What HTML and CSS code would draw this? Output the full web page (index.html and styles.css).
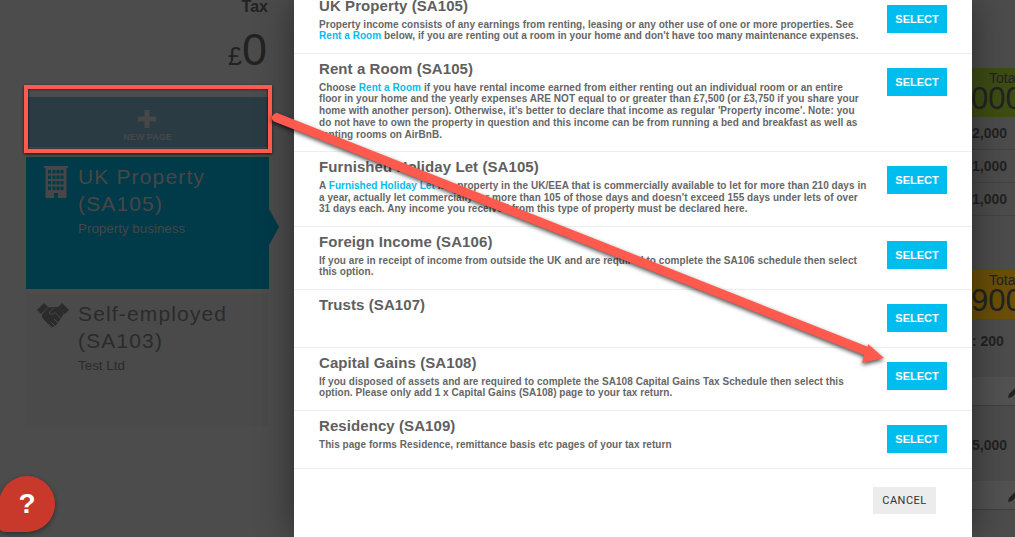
FILE: index.html
```html
<!DOCTYPE html>
<html lang="en">
  <head>
    <meta charset="UTF-8" />
    <title>Add a page</title>
    <link rel="stylesheet" href="styles.css">
  </head>
  <body>
    <div class="page">
      <!-- Sidebar behind the overlay -->
      <aside class="sidebar">
        <div class="tax">
          <strong class="tax-label">Tax</strong>
          <div class="tax-amount"><span class="pound">£</span>0</div>
        </div>
        <div class="new-page">
          <svg class="plus" viewBox="0 0 20 20" width="20" height="20"><path d="M7.5 1h5v6.5H19v5h-6.5V19h-5v-6.5H1v-5h6.500z" /></svg>
          <span>NEW PAGE</span>
        </div>
        <div class="page-card active">
          <svg class="card-icon" viewBox="0 0 24 34" width="24" height="34">
            <path fill-rule="evenodd" d="M0 0h24v2h-1.500v30H14v-5h-4v5H1.500V2H0zM4 4v3.500h3V4zm4.500 0v3.500h3V4zm4 0v3.500h3V4zm4 0v3.500h3V4zM4 9.500V13h3V9.500zm4.500 0V13h3V9.500zm4 0V13h3V9.500zm4 0V13h3V9.500zM4 15v3.500h3V15zm4.500 0v3.500h3V15zm4 0v3.500h3V15zm4 0v3.500h3V15zM4 20.500v3.500h3v-3.500zm4.500 0v3.500h3v-3.500zm4 0v3.500h3v-3.500zm4 0v3.500h3v-3.500z" />
          </svg>
          <div class="card-text">
            <h2>UK Property (SA105)</h2>
            <p>Property business</p>
          </div>
          <span class="card-notch"></span>
        </div>
        <div class="page-card">
          <svg class="card-icon hands" viewBox="0 0 32 25" width="32" height="25">
            <path d="M0 7 7 0l4 4-7 7zM32 7l-7-7-4 4 7 7z" />
            <path d="M5 11.500 11 4.500l5-.5 5 0 6 6.500-3.500 5.500-2.500 4-3 3-3.500 1.500-3.500-3.500-6-6.500z" />
            <path class="finger-cuts" d="M17 4.500 12.500 9c-.5 2 1.500 3 3 2L18 9.500l6 6M21 20l-4-4M18 23l-3.500-3.500M14.500 24l-3-3" />
          </svg>
          <div class="card-text">
            <h2>Self-employed (SA103)</h2>
            <p>Test Ltd</p>
          </div>
        </div>
      </aside>

      <!-- Modal -->
      <main class="modal">
        <div class="option-list">
          <section class="option">
            <div class="option-text">
              <h3>UK Property (SA105)</h3>
              <p>Property income consists of any earnings from renting, leasing or any other use of one or more properties. See<br><a>Rent a Room</a> below, if you are renting out a room in your home and don't have too many maintenance expenses.</p>
            </div>
            <button class="select">SELECT</button>
          </section>
          <section class="option">
            <div class="option-text">
              <h3>Rent a Room (SA105)</h3>
              <p>Choose <a>Rent a Room</a> if you have rental income earned from either renting out an individual room or an entire<br>floor in your home and the yearly expenses ARE NOT equal to or greater than £7,500 (or £3,750 if you share your<br>home with another person). Otherwise, it's better to declare that income as regular 'Property income'. Note: you<br>do not have to own the property in question and this income can be from running a bed and breakfast as well as<br>renting rooms on AirBnB.</p>
            </div>
            <button class="select">SELECT</button>
          </section>
          <section class="option">
            <div class="option-text">
              <h3>Furnished Holiday Let (SA105)</h3>
              <p>A <a>Furnished Holiday Let</a> is a property in the UK/EEA that is commercially available to let for more than 210 days in<br>a year, actually let commercially for more than 105 of those days and doesn't exceed 155 days under lets of over<br>31 days each. Any income you received from this type of property must be declared here.</p>
            </div>
            <button class="select">SELECT</button>
          </section>
          <section class="option">
            <div class="option-text">
              <h3>Foreign Income (SA106)</h3>
              <p>If you are in receipt of income from outside the UK and are required to complete the SA106 schedule then select<br>this option.</p>
            </div>
            <button class="select">SELECT</button>
          </section>
          <section class="option">
            <div class="option-text">
              <h3>Trusts (SA107)</h3>
            </div>
            <button class="select">SELECT</button>
          </section>
          <section class="option">
            <div class="option-text">
              <h3>Capital Gains (SA108)</h3>
              <p>If you disposed of assets and are required to complete the SA108 Capital Gains Tax Schedule then select this<br>option. Please only add 1 x Capital Gains (SA108) page to your tax return.</p>
            </div>
            <button class="select">SELECT</button>
          </section>
          <section class="option">
            <div class="option-text">
              <h3>Residency (SA109)</h3>
              <p>This page forms Residence, remittance basis etc pages of your tax return</p>
            </div>
            <button class="select">SELECT</button>
          </section>
        </div>
        <div class="modal-footer">
          <button class="cancel">CANCEL</button>
        </div>
      </main>

      <!-- Right column behind the overlay -->
      <aside class="summary">
        <div class="total green">
          <span class="total-label">Total</span>
          <span class="total-value">000</span>
        </div>
        <div class="summary-row">2,000</div>
        <div class="summary-row">1,000</div>
        <div class="summary-row">1,000</div>
        <div class="total amber">
          <span class="total-label">Total</span>
          <span class="total-value">900</span>
        </div>
        <div class="summary-row tall">: 200</div>
        <div class="summary-band">
          <svg viewBox="0 0 12 12" width="12" height="12"><path d="M0 12l1-4 7-7 3 3-7 7z" /></svg>
        </div>
        <div class="summary-row tall second">5,000</div>
        <div class="summary-band">
          <svg viewBox="0 0 12 12" width="12" height="12"><path d="M0 12l1-4 7-7 3 3-7 7z" /></svg>
        </div>
      </aside>
    </div>

    <button class="help">?</button>

    <!-- Screenshot annotations -->
    <div class="callout"></div>
    <svg class="arrow" viewBox="0 0 1015 537" width="1015" height="537">
      <path d="M276.600 112.800 867.600 346.800 868 344 884 358 862 363 864.400 355.200 273.400 121.200Q269 116 276.600 112.800Z" />
    </svg>
  </body>
</html>
```

FILE: styles.css
```css
* {
  box-sizing: border-box;
}
html,
body {
  margin: 0;
  height: 100%;
  overflow: hidden;
}
body {
  font-family: "Liberation Sans", Arial, sans-serif;
  background: #4c4c4c;
}
.page {
  display: flex;
  height: 537px;
}

/* Sidebar */
.sidebar {
  width: 294px;
  flex: none;
  padding: 0 25px 0 26px;
  display: flex;
  flex-direction: column;
}
.tax {
  height: 99px;
  margin-top: -2px;
  text-align: right;
  color: #222;
}
.tax-label {
  display: block;
  font-size: 16px;
  line-height: 18px;
  padding-right: 1px;
}
.tax-amount {
  font-size: 45px;
  line-height: 50px;
  margin-top: 9px;
  padding-right: 2px;
}
.pound {
  font-size: 25px;
}
.new-page {
  height: 50px;
  flex: none;
  background: #2a3b44;
  color: #474747;
  display: flex;
  flex-direction: column;
  align-items: center;
  padding-top: 12px;
  font-size: 9px;
  font-weight: bold;
  line-height: 10px;
}
.plus {
  fill: #474747;
  margin: 0 2px 3px 0;
}
.page-card {
  height: 132px;
  flex: none;
  margin-top: 10px;
  background: #4a4a4a;
  display: flex;
  color: #2b2b2b;
  position: relative;
  padding: 9px 16px 0 11px;
}
.page-card + .page-card {
  margin-top: 5px;
}
.page-card.active {
  background: #013a49;
  color: #474747;
}
.card-icon {
  fill: currentColor;
  flex: none;
}
.page-card.active .card-icon {
  margin: 0 10px 0 7px;
}
.card-icon.hands {
  margin-right: 9px;
}
.finger-cuts {
  fill: none;
  stroke: #4a4a4a;
  stroke-width: 1;
}
.card-text {
  margin-top: -3px;
}
.card-text h2 {
  margin: 0;
  font-size: 21px;
  font-weight: normal;
  letter-spacing: 1.15px;
  line-height: 27px;
}
.card-text p {
  margin: 3px 0 0;
  font-size: 13.4px;
  line-height: 18px;
}
.card-notch {
  position: absolute;
  right: -10px;
  top: 52px;
  border-left: 10px solid #013a49;
  border-top: 18px solid transparent;
  border-bottom: 18px solid transparent;
}

/* Modal */
.modal {
  width: 678px;
  flex: none;
  background: #fff;
  box-shadow: 0 0 34px rgba(0, 0, 0, 0.45);
  position: relative;
  overflow: hidden;
}
.option-list {
  margin-top: -9.5px;
}
.option {
  display: flex;
  justify-content: space-between;
  align-items: flex-start;
  padding: 5px 25px 10.5px 25px;
  border-bottom: 1px solid #eee;
  min-height: 58px;
}
.option-text {
  width: 555px;
  white-space: nowrap;
}
.option h3 {
  margin: 0 0 3px;
  font-size: 15px;
  line-height: 20px;
  letter-spacing: 0.08px;
  color: #5f5f5f;
}
.option p {
  margin: 0;
  font-size: 10px;
  font-weight: bold;
  line-height: 11.75px;
  letter-spacing: 0.05px;
  color: #666;
}
.option a {
  color: #00bdf0;
}
.select {
  width: 60px;
  height: 28px;
  margin-top: 9px;
  border: 0;
  padding: 0;
  background: #00bdf0;
  color: #fff;
  font-family: inherit;
  font-size: 11px;
  font-weight: bold;
}
.modal-footer {
  display: flex;
  justify-content: flex-end;
  padding: 18px 36px 0 0;
}
.cancel {
  width: 63px;
  height: 27px;
  border: 0;
  padding: 0;
  background: #ececec;
  color: #333;
  font-family: Roboto, sans-serif;
  font-size: 11px;
  letter-spacing: 0.5px;
}

/* Right column */
.summary {
  flex: 1;
  overflow: hidden;
  color: #222;
  padding-top: 68px;
  display: flex;
  flex-direction: column;
  white-space: nowrap;
}
.total {
  height: 49px;
  padding-left: 17px;
  display: flex;
  flex-direction: column;
  flex: none;
}
.total.green {
  background: #3d4d14;
}
.total.amber {
  background: #6b4f07;
  margin-top: 54px;
}
.total-label {
  font-size: 14px;
  line-height: 16px;
  margin-top: 2px;
}
.total-value {
  font-size: 31px;
  line-height: 26px;
  margin-left: -18px;
}
.summary-row {
  height: 33px;
  flex: none;
  border-bottom: 1px solid #434343;
  font-size: 14px;
  font-weight: bold;
  line-height: 32px;
  text-align: right;
  padding-right: 14px;
}
.summary-row.tall {
  height: 58px;
  border: 0;
  line-height: 44px;
}
.summary-row.second {
  height: 75px;
  line-height: 78px;
}
.summary-band {
  height: 29px;
  flex: none;
  background: #525252;
  border-bottom: 1px solid #3f3f3f;
  padding: 9px 0 0 36px;
}
.summary-band svg {
  fill: #222;
  display: block;
}

/* Help button */
.help {
  position: absolute;
  left: -1px;
  top: 476px;
  width: 56px;
  height: 56px;
  border: 0;
  border-radius: 50% 50% 50% 6px;
  background: #c8392b;
  color: #fff;
  font-family: "Liberation Sans", sans-serif;
  font-size: 28px;
  font-weight: bold;
  box-shadow: 0 2px 5px rgba(0, 0, 0, 0.4);
}

/* Annotations */
.callout {
  position: absolute;
  left: 24px;
  top: 85px;
  width: 248px;
  height: 68px;
  border: 4px solid #ff5a4d;
  box-shadow: 0 1px 3px rgba(0, 0, 0, 0.7), inset 0 0 3px rgba(0, 0, 0, 0.7);
}
.arrow {
  position: absolute;
  left: 0;
  top: 0;
  fill: #ff5a4d;
  filter: drop-shadow(0 2px 2px rgba(0, 0, 0, 0.7));
  pointer-events: none;
}
```
